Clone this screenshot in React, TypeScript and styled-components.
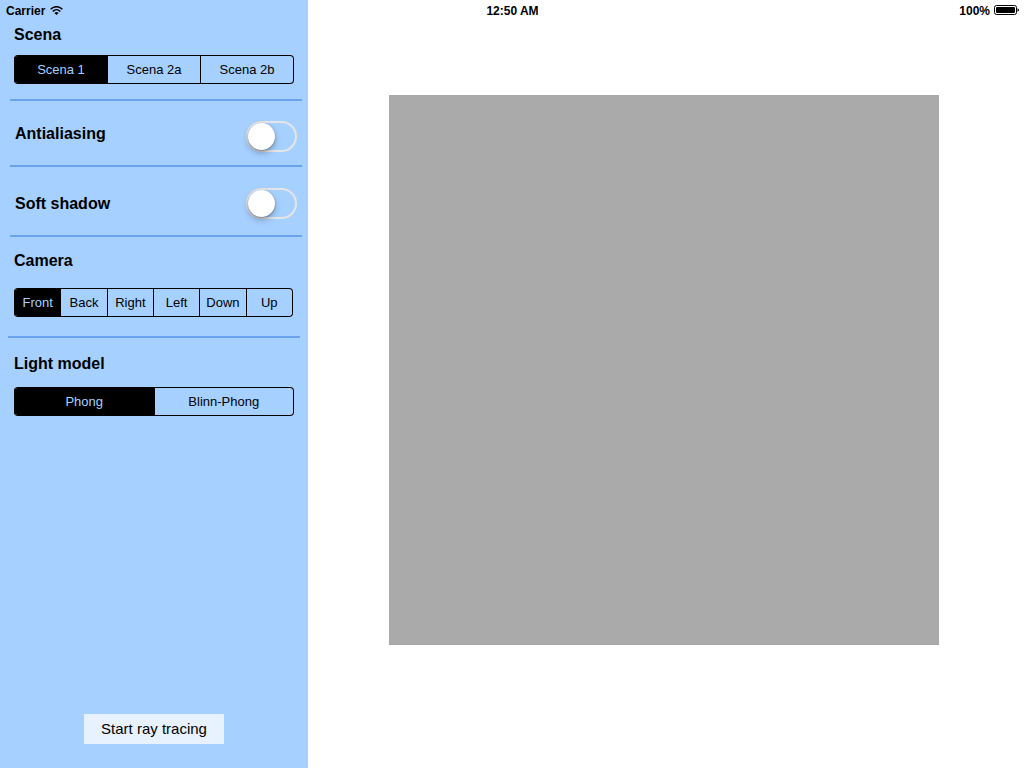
import React from 'react';
import styled, { createGlobalStyle } from 'styled-components';

const colors = {
  panel: '#a6d0ff',
  line: '#6ba2ee',
  ink: '#000000',
  canvas: '#aaaaaa',
  action: '#e8f2fe',
};

const GlobalStyle = createGlobalStyle`
  * { box-sizing: border-box; }
  body {
    margin: 0;
    background: #ffffff;
    color: ${colors.ink};
    font-family: "Liberation Sans", Arial, sans-serif;
  }
  button, input { font: inherit; }
`;

const Page = styled.div`
  display: flex;
  min-height: 100vh;
`;

const StatusBar = styled.header`
  position: absolute;
  top: 0;
  left: 0;
  right: 0;
  display: grid;
  grid-template-columns: 1fr auto 1fr;
  align-items: center;
  height: 22px;
  padding: 0 5px 0 6px;
  font-size: 12px;
  font-weight: bold;
  line-height: 22px;
`;

const StatusGroup = styled.div<{ $end?: boolean }>`
  display: flex;
  align-items: center;
  justify-content: ${(p) => (p.$end ? 'flex-end' : 'flex-start')};
  gap: ${(p) => (p.$end ? 4 : 5)}px;
`;

const StatusIcon = styled.svg`
  display: block;
  margin-bottom: 2px;
`;

const Sidebar = styled.aside`
  display: flex;
  flex: 0 0 308px;
  flex-direction: column;
  background: ${colors.panel};
`;

const Section = styled.fieldset<{ $top: number; $bottom: number; $shift?: boolean; $last?: boolean }>`
  min-width: 0;
  margin: ${(p) => (p.$shift ? '0 8px' : '0 6px 0 10px')};
  padding: ${(p) => p.$top}px ${(p) => (p.$shift ? '7px' : '8px')} ${(p) => p.$bottom}px ${(p) => (p.$shift ? '6px' : '4px')};
  border: 0;
  border-bottom: ${(p) => (p.$last ? '0' : `2px solid ${colors.line}`)};
`;

const Title = styled.h2`
  margin: 0;
  font-size: 16px;
  font-weight: bold;
  line-height: 20px;
`;

const Segments = styled.div<{ $gap: number }>`
  display: flex;
  height: 29px;
  margin-top: ${(p) => p.$gap}px;
  border: 1px solid ${colors.ink};
  border-left: 0;
  border-radius: 4px;
  overflow: hidden;
`;

const Segment = styled.label`
  display: flex;
  flex: 1 1 0;
  align-items: center;
  justify-content: center;
  border-left: 1px solid ${colors.ink};
  font-size: 13px;
  line-height: 16px;
  cursor: pointer;

  &:has(input:checked) {
    background: ${colors.ink};
    color: ${colors.panel};
  }
`;

const HiddenRadio = styled.input`
  position: absolute;
  width: 1px;
  height: 1px;
  margin: 0;
  opacity: 0;
`;

const SwitchRow = styled.div<{ $top: number; $bottom: number; $align: string }>`
  display: flex;
  align-items: ${(p) => p.$align};
  justify-content: space-between;
  margin: 0 6px 0 10px;
  padding: ${(p) => p.$top}px 5px ${(p) => p.$bottom}px;
  border-bottom: 2px solid ${colors.line};
`;

const SwitchLabel = styled.label`
  padding: 3px 0;
  font-size: 16px;
  font-weight: bold;
  line-height: 20px;
`;

const Switch = styled.input`
  appearance: none;
  width: 51px;
  height: 31px;
  margin: 0;
  border: 2px solid #e5e5e5;
  border-radius: 16px;
  cursor: pointer;

  &::before {
    content: "";
    display: block;
    width: 27px;
    height: 27px;
    border-radius: 50%;
    background: #ffffff;
    box-shadow: 0 3px 6px rgba(0, 0, 0, 0.25), 0 1px 2px rgba(0, 0, 0, 0.3);
  }
  &:checked { background: #4cd964; border-color: #4cd964; }
  &:checked::before { margin-left: 20px; }
`;

const StartButton = styled.button`
  align-self: center;
  width: 140px;
  height: 30px;
  margin: auto 0 24px;
  padding: 0;
  border: 0;
  background: ${colors.action};
  color: ${colors.ink};
  font-size: 15px;
  line-height: 30px;
  cursor: pointer;
`;

const Main = styled.main`
  display: flex;
  flex: 1;
  align-items: flex-start;
  justify-content: center;
  min-width: 0;
  padding: 95px 4px 24px 0;
`;

const RenderArea = styled.div`
  width: 100%;
  max-width: 550px;
  aspect-ratio: 1;
  background: ${colors.canvas};
`;

function SegmentedControl({ name, options, gap }: { name: string; options: string[]; gap: number }) {
  return (
    <Segments $gap={gap}>
      {options.map((option, i) => (
        <Segment key={option}>
          <HiddenRadio type="radio" name={name} value={option} defaultChecked={i === 0} />
          {option}
        </Segment>
      ))}
    </Segments>
  );
}

function WifiIcon() {
  return (
    <StatusIcon width="13" height="9" viewBox="0 0 13 9" fill="none" stroke="#000" aria-hidden="true">
      <path d="M0.6 3.3C4 -0.2 9 -0.2 12.4 3.3" strokeWidth="1.5" />
      <path d="M2.7 5.4C4.9 3.2 8.1 3.2 10.3 5.4" strokeWidth="1.4" />
      <path d="M4.4 6.9Q6.5 5.1 8.6 6.9L6.5 9Z" fill="#000" stroke="none" />
    </StatusIcon>
  );
}

function BatteryIcon() {
  return (
    <StatusIcon width="25" height="10" viewBox="0 0 25 10" aria-hidden="true">
      <rect x="0.5" y="0.5" width="22" height="9" rx="2" fill="none" stroke="#000" />
      <rect x="2" y="2" width="19" height="6" rx="1" fill="#000" />
      <path d="M23.5 3.2Q25 3.8 25 5T23.5 6.8Z" fill="#000" />
    </StatusIcon>
  );
}

export default function App() {
  return (
    <>
      <GlobalStyle />
      <Page>
        <Sidebar>
          <Section $top={25} $bottom={15}>
            <Title>Scena</Title>
            <SegmentedControl name="scene" options={['Scena 1', 'Scena 2a', 'Scena 2b']} gap={10} />
          </Section>
          <SwitchRow $top={20} $bottom={13} $align="flex-start">
            <SwitchLabel htmlFor="antialiasing">Antialiasing</SwitchLabel>
            <Switch id="antialiasing" type="checkbox" role="switch" />
          </SwitchRow>
          <SwitchRow $top={21} $bottom={16} $align="center">
            <SwitchLabel htmlFor="soft-shadow">Soft shadow</SwitchLabel>
            <Switch id="soft-shadow" type="checkbox" role="switch" />
          </SwitchRow>
          <Section $top={14} $bottom={19} $shift>
            <Title>Camera</Title>
            <SegmentedControl name="camera" options={['Front', 'Back', 'Right', 'Left', 'Down', 'Up']} gap={17} />
          </Section>
          <Section $top={16} $bottom={24} $last>
            <Title>Light model</Title>
            <SegmentedControl name="light" options={['Phong', 'Blinn-Phong']} gap={13} />
          </Section>
          <StartButton type="button">Start ray tracing</StartButton>
        </Sidebar>
        <Main>
          <RenderArea />
        </Main>
      </Page>
      <StatusBar>
        <StatusGroup>
          <span>Carrier</span>
          <WifiIcon />
        </StatusGroup>
        <span>12:50 AM</span>
        <StatusGroup $end>
          <span>100%</span>
          <BatteryIcon />
        </StatusGroup>
      </StatusBar>
    </>
  );
}
